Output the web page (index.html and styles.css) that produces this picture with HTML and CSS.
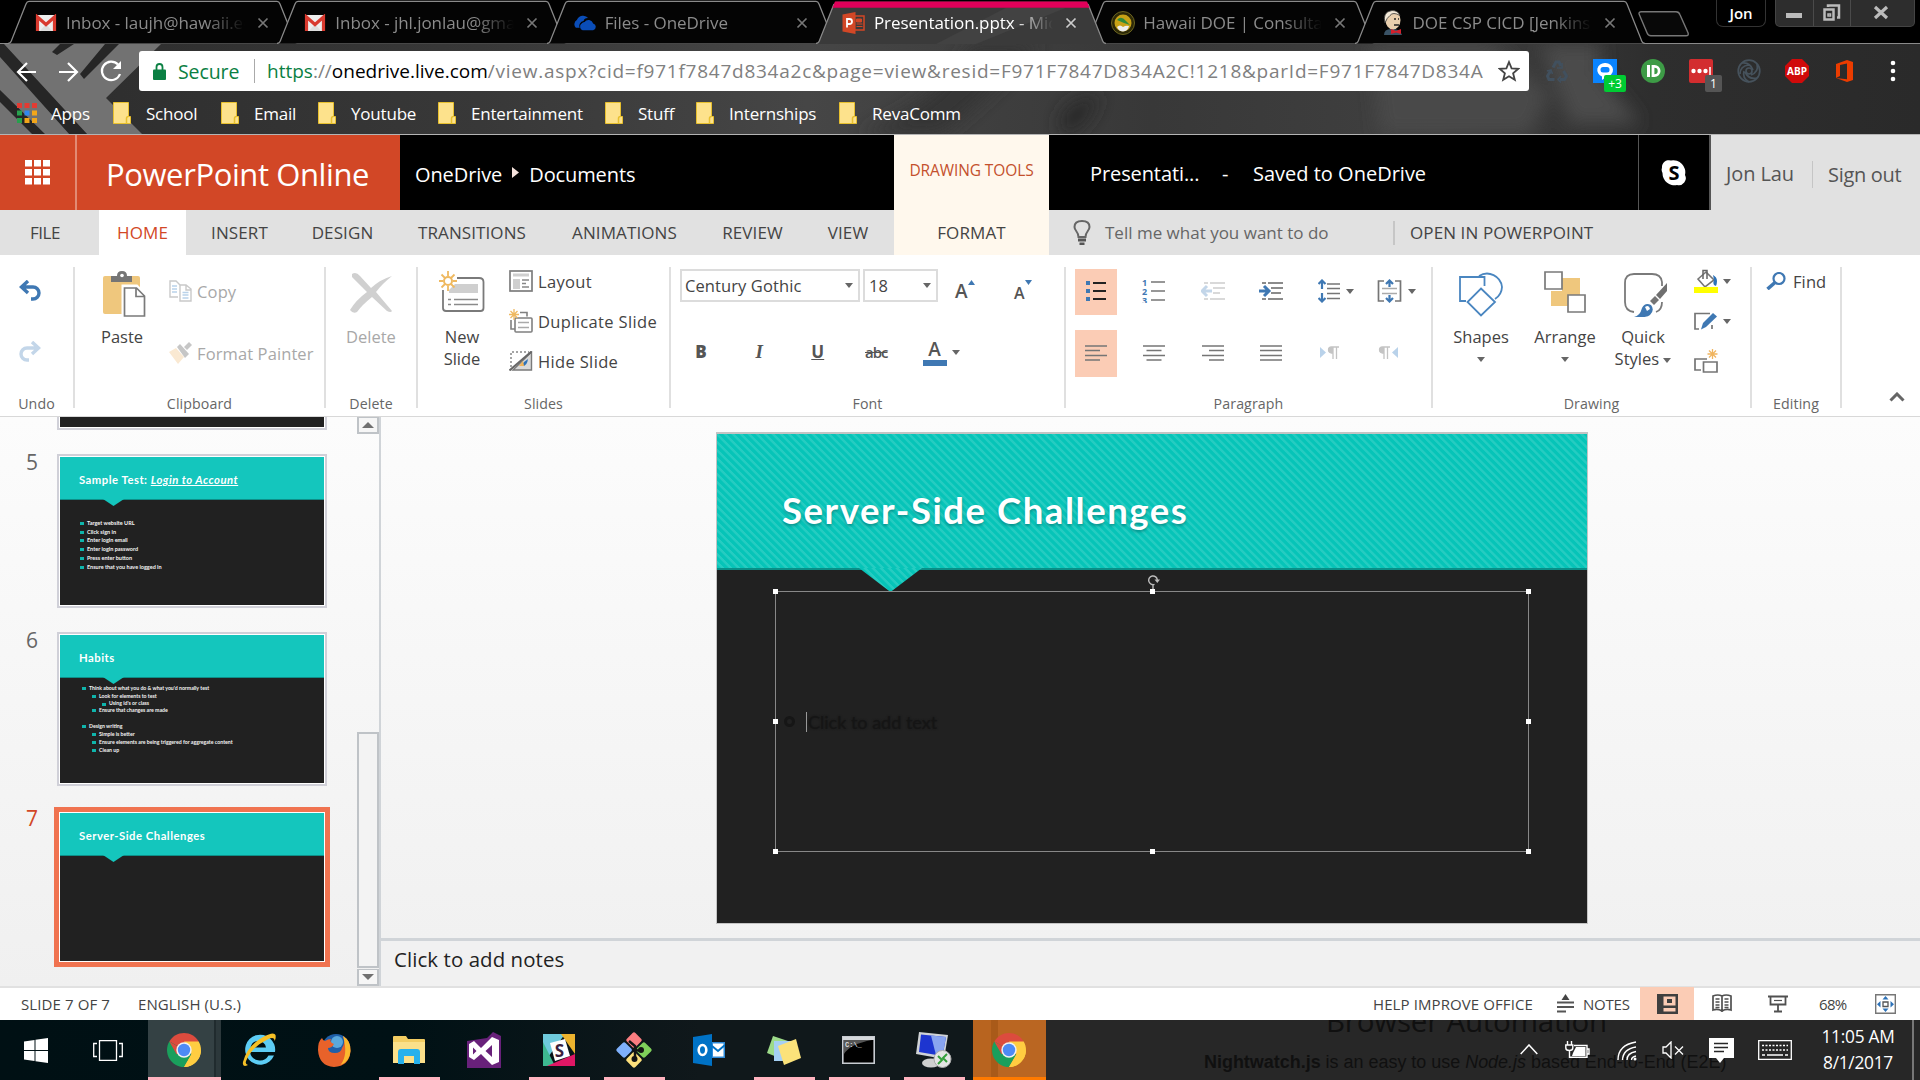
FILE: index.html
```html
<!DOCTYPE html>
<html lang="en">
<head>
<meta charset="utf-8">
<title>Presentation.pptx - Microsoft PowerPoint Online</title>
<link rel="stylesheet" href="styles.css">
</head>
<body>
<svg class="defs" width="0" height="0">
  <symbol id="tabshape" viewBox="0 0 290 45" preserveAspectRatio="none"><path d="M0 44.5 Q3 44 4 40 L18 4 Q19 1.500 21 1.500 H269 Q271 1.500 272 4 L286 40 Q287 44 290 44.500" fill="#040404" stroke="#8a8a8a" stroke-width="1.300"/></symbol>
  <symbol id="gmail" viewBox="0 0 22 18"><rect x="1" y="1" width="20" height="16" rx="1.500" fill="#eee"/><path d="M5 17 11 10l6 7z" fill="#ddd"/><path d="M2.500 17V3L11 10.500 19.500 3v14" fill="none" stroke="#d93a2f" stroke-width="3.200"/></symbol>
  <symbol id="chrome" viewBox="0 0 34 34"><path d="M17 17 2.300 8.500A17 17 0 0 1 31.700 8.500z" fill="#dc4b3e"/><path d="M17 17 2.300 8.500A17 17 0 0 0 17 34z" fill="#1a9f5c"/><path d="M17 17 9.500 21.300 2.300 8.500z" fill="#dc4b3e"/><path d="M17 34A17 17 0 0 0 31.700 8.500H17L24.400 21z" fill="#ffcd41"/><path d="M9.600 21.300 17 34 24.400 21.300z" fill="#1a9f5c"/><path d="M24.400 21.300 17 34A17 17 0 0 0 34 17z" fill="#ffcd41"/><circle cx="17" cy="17" r="7.700" fill="#f1f1f1"/><circle cx="17" cy="17" r="6.200" fill="#4d8af5"/></symbol>
  <symbol id="folder" viewBox="0 0 18 22"><path d="M.5.5h15v14h2v7H.5z" fill="#fde28c" stroke="#e8c02e"/><path d="M13.500 21.500v-5q0-2 2-2" fill="none" stroke="#e8c02e" stroke-width="1.500"/></symbol>
  <symbol id="x" viewBox="0 0 12 12"><path d="M1.500 1.500l9 9m0-9l-9 9" stroke="currentColor" stroke-width="1.700"/></symbol>
  <symbol id="dd" viewBox="0 0 8 5"><path d="M0 0h8L4 5z" fill="#666"/></symbol>
</svg>
<div class="screen">
  <header class="tabstrip">
    <div class="tab"><svg class="shape"><use href="#tabshape"/></svg><svg class="fav" width="22" height="18"><use href="#gmail"/></svg><span class="tt">Inbox - laujh@hawaii.edu</span><svg class="close" width="12" height="12"><use href="#x"/></svg></div>
    <div class="tab"><svg class="shape"><use href="#tabshape"/></svg><svg class="fav" width="22" height="18"><use href="#gmail"/></svg><span class="tt">Inbox - jhl.jonlau@gmail</span><svg class="close" width="12" height="12"><use href="#x"/></svg></div>
    <div class="tab"><svg class="shape"><use href="#tabshape"/></svg><svg class="fav cloud" width="25" height="16" viewBox="0 0 25 16"><path d="M3 13a5 5 0 0 1 1-8A7 7 0 0 1 16 3 4 4 0 0 0 11 6 5 5 0 0 0 7 13z" fill="#0a4db8"/><path d="M10 15.500a4 4 0 0 1-1-7 4 4 0 0 1 3-1.500 5 5 0 0 1 9 1.500A3.600 3.600 0 0 1 21 15.500z" fill="#0a4db8"/></svg><span class="tt">Files - OneDrive</span><svg class="close" width="12" height="12"><use href="#x"/></svg></div>
    <div class="tab active"><svg class="shape" viewBox="0 0 290 45" preserveAspectRatio="none"><path d="M0 45 Q3 44 4 40 L18 4 Q19 1.500 21 1.500 H269 Q271 1.500 272 4 L286 40 Q287 44 290 45z" fill="#3a3a3a"/><path d="M120 45L190 8h60L160 45z" fill="#424242"/><path d="M0 44.500 Q3 44 4 40 L18 4M272 4 L286 40 Q287 44 290 44.500" fill="none" stroke="#8a8a8a" stroke-width="1.300"/><path d="M16.500 8 19 1.500H271L273.500 8z" fill="#e1005a"/></svg><svg class="fav" width="23" height="22" viewBox="0 0 23 22"><path d="M12 4h9.500v14H12z" fill="none" stroke="#d24726" stroke-width="1.500"/><path d="M14 7h5v3h-5zM14 12h6M14 14.500h6" stroke="#d24726" fill="#d24726"/><path d="M0 2.500 13 0v22L0 19.500z" fill="#d24726"/><path d="M4.500 15.500V7H7q2.500 0 2.500 2.500T7 12H4.500" fill="none" stroke="#fff" stroke-width="1.800"/></svg><span class="tt">Presentation.pptx - Micr</span><svg class="close" width="12" height="12"><use href="#x"/></svg></div>
    <div class="tab"><svg class="shape"><use href="#tabshape"/></svg><svg class="fav" width="24" height="24" viewBox="0 0 24 24"><circle cx="12" cy="12" r="11.500" fill="#2e2a08" stroke="#6b6420"/><circle cx="12" cy="12" r="8.500" fill="#c8a216"/><path d="M6 9q4-5 9 1l4 4-6-2z" fill="#2f8a3a"/><path d="M6 16q3-3 6 0 3-2 6-1-1 5-6 5.500-4 0-6-4.500z" fill="#eee"/></svg><span class="tt">Hawaii DOE | Consultant</span><svg class="close" width="12" height="12"><use href="#x"/></svg></div>
    <div class="tab"><svg class="shape"><use href="#tabshape"/></svg><svg class="fav" width="22" height="25" viewBox="0 0 22 25"><path d="M2 25q0-6 7-6 9-1 11 6z" fill="#3a5366"/><ellipse cx="11" cy="10" rx="7.500" ry="9.500" fill="#e9cfae"/><path d="M3 13Q0 2 10 .5q6 0 8 5-7-4-10 0-3 2-5 7.500z" fill="#f3e9d8" stroke="#333" stroke-width=".8"/><path d="M12 9h2m2 0h1M12 15h5" stroke="#222" stroke-width="1.300"/><path d="M9 19l5 2 5-2v5l-5-1.500L9 24z" fill="#d3202c"/></svg><span class="tt">DOE CSP CICD [Jenkins]</span><svg class="close" width="12" height="12"><use href="#x"/></svg></div>
    <svg class="newtab" width="52" height="26" viewBox="0 0 52 26"><path d="M3 .8h35q3 0 4 3l8 18q1 3-2 3H13q-3 0-4-3L1.500 4Q0 1 3 .8z" fill="#080808" stroke="#777" stroke-width="1.400"/></svg>
    <div class="profile">Jon</div>
    <div class="winctl">
      <svg width="37" height="26"><path d="M10 15.500h16" stroke="#bbb" stroke-width="5"/></svg>
      <svg width="37" height="26" fill="none" stroke="#bbb" stroke-width="2.500"><path d="M14 7V5.500h11v12h-2M10.500 9.500h9v10h-9z"/><path d="M14 14h2.500v2H14z" stroke-width="1.500"/></svg>
      <svg width="64" height="26"><path d="M24 7l12 11M36 7 24 18" stroke="#bbb" stroke-width="3.200"/></svg>
    </div>
  </header>

  <section class="toolbar">
    <svg class="theme" width="1920" height="91" viewBox="0 0 1920 91">
      <defs>
        <linearGradient id="tg" x1="0" x2="1"><stop offset="0" stop-color="#2c2c2c"/><stop offset=".25" stop-color="#383838"/><stop offset=".42" stop-color="#464646"/><stop offset=".6" stop-color="#383838"/><stop offset=".75" stop-color="#404040"/><stop offset=".86" stop-color="#2e2e2e"/><stop offset="1" stop-color="#2a2a2a"/></linearGradient>
        <filter id="soft"><feGaussianBlur stdDeviation="9"/></filter>
      </defs>
      <rect width="1920" height="91" fill="url(#tg)"/>
      <path d="M0 0H161L106 54 143 91H0z" fill="#727272"/>
      <path d="M0 13V0H4L88 91H70zM74 0H60L52 8l5 3zM119 0H105L80 30l4 5zM0 46 46 91H33L0 58z" fill="#262626"/>
      <g filter="url(#soft)"><path d="M860 91Q950 50 970 0h70Q980 60 940 91z" fill="#343434"/><path d="M1063 91Q1050 60 1100 50q-10 30-30 41z" fill="#2a2a2a"/><path d="M1370 0h120l60 50-20 41H1380z" fill="#484848"/><path d="M1540 0h60v30l40 50h-70z" fill="#4c4c4c"/></g>
      <path d="M0 90.500H1920" stroke="#b4b4b4"/>
    </svg>
    <div class="navrow">
      <svg class="navs" width="110" height="26" viewBox="0 0 110 26" fill="none" stroke="#fff" stroke-width="2.200"><path d="M20 13H2M11 4l-9 9 9 9M43 13h18M52 4l9 9-9 9"/><path d="M102 5.500A9.300 9.300 0 1 0 104 15"/><path d="M105 2v8h-8z" fill="#fff" stroke="none"/></svg>
      <div class="omni">
        <svg width="13" height="17" viewBox="0 0 13 17"><path d="M3.500 7V4a3 3 0 0 1 6 0v3" fill="none" stroke="#0b8043" stroke-width="1.800"/><rect y="6.500" width="13" height="10.500" rx="1" fill="#0b8043"/></svg>
        <span class="secure">Secure</span><i class="vbar"></i>
        <span class="url"><b class="g">https</b>://<b class="k">onedrive.live.com</b><b class="tail">/view.aspx?cid=f971f7847d834a2c&amp;page=view&amp;resid=F971F7847D834A2C!1218&amp;parId=F971F7847D834A</b></span>
        <svg width="22" height="22" viewBox="0 0 22 22"><path d="M11 2l2.600 6.300 6.700.5-5.200 4.400 1.700 6.600L11 16.200l-5.800 3.600 1.700-6.600L1.700 8.800l6.700-.5z" fill="none" stroke="#444" stroke-width="1.800"/></svg>
      </div>
      <div class="exts">
        <svg width="24" height="24" viewBox="0 0 24 24" fill="none" stroke="#41505e" stroke-width="3"><path d="M8 8.500 11 3h3l2 4M18.500 12l3 5-2 3.500H15M9.500 20.500H4L2.500 17l3-5"/><path d="M17 4v5h-5M16 17l-3 3.500 3 3M2 12l4-1 1.500 4" stroke-width="1.600"/></svg>
        <div class="ext"><svg width="24" height="24" viewBox="0 0 24 24"><path d="M0 0h24v24H0z" fill="#0a84ff"/><path d="M12 4a7.500 7 0 0 1 1 14l-4 3v-3.500A7.500 7 0 0 1 12 4z" fill="#fff"/><rect x="7.500" y="8" width="9" height="5.500" rx="2.500" fill="#0a84ff"/></svg><span class="badge">+3</span></div>
        <svg width="24" height="24" viewBox="0 0 24 24"><circle cx="12" cy="12" r="12" fill="#3d9b46"/><path d="M7.500 6v12" stroke="#fff" stroke-width="3"/><path d="M12 7.400h1.500a4.600 4.600 0 0 1 0 9.200H12z" fill="none" stroke="#fff" stroke-width="2.800"/></svg>
        <div class="ext"><svg width="24" height="24" viewBox="0 0 24 24"><rect width="24" height="24" rx="2" fill="#d32d2f"/><circle cx="4.500" cy="12" r="2.200" fill="#fff"/><circle cx="10.500" cy="12" r="2.200" fill="#fff"/><circle cx="16.500" cy="12" r="2.200" fill="#fff"/><path d="M21 8v8" stroke="#fff" stroke-width="1.500"/></svg><span class="badge dark">1</span></div>
        <svg width="24" height="24" viewBox="0 0 24 24" fill="none" stroke="#46525c" stroke-width="1.700"><circle cx="12" cy="12" r="10.800"/><circle cx="12" cy="12" r="3"/><path d="M5 4q8-1 11 7M20 5q2 8-6 11M20 19q-8 2-12-6M3 15q0-8 9-9M12 23q-7-4-5-11"/></svg>
        <svg width="24" height="24" viewBox="0 0 24 24"><path d="M7 0h10l7 7v10l-7 7H7l-7-7V7z" fill="#d00a0a"/><text x="12" y="16.300" text-anchor="middle" class="abp">ABP</text></svg>
        <svg width="24" height="24" viewBox="0 0 24 24"><path d="M3 5 14 1l6 2v18l-6 2-11-4 11 1.300V4.500L7 6v11l-4 2z" fill="#eb3c00"/></svg>
        <svg width="24" height="24"><circle cx="12" cy="4" r="2.300" fill="#fff"/><circle cx="12" cy="12" r="2.300" fill="#fff"/><circle cx="12" cy="20" r="2.300" fill="#fff"/></svg>
      </div>
    </div>
    <nav class="bookmarks">
      <span class="bm apps"><svg width="20" height="20" viewBox="0 0 20 20"><path d="M0 0h5v5H0zM7.500 0h5v5h-5zM15 0h5v5h-5z" fill="#e33b32"/><path d="M0 7.500h5v5H0zM0 15h5v5H0z" fill="#27a04d"/><path d="M7.500 7.500h5v5h-5z" fill="#2f88f0"/><path d="M15 7.500h5v5h-5zM7.500 15h5v5h-5zM15 15h5v5h-5z" fill="#f2a61a"/></svg>Apps</span>
      <span class="bm b1"><svg width="18" height="22"><use href="#folder"/></svg>School</span>
      <span class="bm b2"><svg width="18" height="22"><use href="#folder"/></svg>Email</span>
      <span class="bm b3"><svg width="18" height="22"><use href="#folder"/></svg>Youtube</span>
      <span class="bm b4"><svg width="18" height="22"><use href="#folder"/></svg>Entertainment</span>
      <span class="bm b5"><svg width="18" height="22"><use href="#folder"/></svg>Stuff</span>
      <span class="bm b6"><svg width="18" height="22"><use href="#folder"/></svg>Internships</span>
      <span class="bm"><svg width="18" height="22"><use href="#folder"/></svg>RevaComm</span>
    </nav>
  </section>

  <section class="apphead">
    <div class="launcher"><svg width="25" height="25" viewBox="0 0 25 25" fill="#fff"><path d="M0 0h7v6.500H0zM9 0h7v6.500H9zM18 0h7v6.500h-7zM0 9h7v6.500H0zM9 9h7v6.500H9zM18 9h7v6.500h-7zM0 18h7v6.500H0zM9 18h7v6.500H9zM18 18h7v6.500h-7z"/></svg></div>
    <div class="brand">PowerPoint Online</div>
    <div class="crumbs"><span>OneDrive</span><svg width="7" height="11"><path d="M0 0v11l7-5.500z" fill="#f6e3dc"/></svg><span>Documents</span></div>
    <div class="ctx">DRAWING TOOLS</div>
    <div class="doc"><span class="dname">Presentati...</span><span class="dash">-</span><span class="saved">Saved to OneDrive</span></div>
    <div class="skype"><svg width="28" height="28" viewBox="0 0 28 28"><path d="M2 9A7 7 0 0 1 11 1.500 12 12 0 0 1 25 16a7 7 0 0 1-8 10A12 12 0 0 1 2.500 14Q1 11 2 9z" fill="#fff"/><text x="14" y="20.500" text-anchor="middle" class="sk">S</text></svg></div>
    <div class="account"><span class="me">Jon Lau</span><span class="so">Sign out</span></div>
  </section>

  <nav class="rtabs">
    <span class="t1">FILE</span><span class="t2">HOME</span><span class="t3">INSERT</span><span class="t4">DESIGN</span><span class="t5">TRANSITIONS</span><span class="t6">ANIMATIONS</span><span class="t7">REVIEW</span><span class="t8">VIEW</span><span class="t9">FORMAT</span>
    <div class="tell"><svg width="18" height="25" viewBox="0 0 18 25"><path d="M5.500 17q0-3-2-5.500-2-2.500-2-4.500 0-6 7.500-6t7.500 6q0 2-2 4.500T12.500 17z" fill="none" stroke="#666" stroke-width="2"/><path d="M5 18.500h8v3H5zM6.500 22.500h5V25h-5z" fill="#555"/></svg>Tell me what you want to do</div>
    <div class="openpp">OPEN IN POWERPOINT</div>
  </nav>

  <section class="ribbon">
    <div class="grp g-undo"><div class="body">
      <svg width="22" height="21" viewBox="0 0 22 21"><path d="M2.500 7H14a5.500 5.500 0 0 1 0 12h-2M9 1 2.500 7 9 13" fill="none" stroke="#3f78b3" stroke-width="3.400"/></svg>
      <svg width="22" height="21" viewBox="0 0 22 21"><path d="M19.500 7H8a5.500 5.500 0 0 0 0 12h2M13 1l6.500 6L13 13" fill="none" stroke="#c3d6e9" stroke-width="3.400"/></svg>
    </div><div class="gl">Undo</div></div>

    <div class="grp g-clip"><div class="body">
      <div class="big w44"><svg width="44" height="46" viewBox="0 0 44 46"><rect x="1" y="5" width="37" height="38" rx="2" fill="#efc77d"/><path d="M9 11V5h6q0-5 5-5t5 5h5v6z" fill="#757575"/><circle cx="20" cy="4.500" r="1.800" fill="#fff"/><path d="M21.500 15.500h13l9 9v21h-22z" fill="#fff" stroke="#fff" stroke-width="4"/><path d="M22.500 17h12l8 8v20h-20zM34 17v8.500h8.500" fill="#fff" stroke="#7a7a7a" stroke-width="1.700"/></svg><span class="pl">Paste</span></div>
      <div class="rows two"><div class="row off"><svg width="23" height="22" viewBox="0 0 23 22" fill="none" stroke="#c9c9c9" stroke-width="1.400"><path d="M9 17H1V1h6l4 4"/><path d="M11 5h6l5 4v12H11zM17 5v5h5"/><path d="M3 6h5M3 9h5M3 12h5M13.500 12.500h6M13.500 15h6M13.500 18h6" stroke="#b9d2ea"/></svg>Copy</div>
      <div class="row off"><svg width="23" height="22" viewBox="0 0 23 22"><path d="M0 10 7 6l8 9-6 7z" fill="#fae9d2"/><path d="M8 5l3-3 9 10-4 4z" fill="#c6c6c6"/><path d="M15 5l5-5 3 3-5 5z" fill="#c6c6c6"/></svg>Format Painter</div></div>
    </div><div class="gl">Clipboard</div></div>

    <div class="grp g-del"><div class="body"><div class="big"><svg width="44" height="46" viewBox="0 0 44 46"><path d="M3 3q4-3 8 2l11 12Q32 8 43 5 33 13 27 21l16 19q-1 2-5 0L23 26Q13 34 8 41q-4 2-7-2 6-10 17-18L3 6z" fill="#d0d0d0"/></svg><span class="mute">Delete</span></div></div><div class="gl">Delete</div></div>

    <div class="grp g-slides"><div class="body">
      <div class="big"><svg width="46" height="46" viewBox="0 0 46 46"><path d="M18 7H40q4.500 0 4.500 4v26q0 3-3 3H7q-3 0-3-3V19" fill="none" stroke="#7a7a7a" stroke-width="1.800"/><path d="M16 13h23v9H10v-3z" fill="#cfcfcf"/><path d="M15 28.500h24M15 33.500h24M9 28.500h3M9 33.500h3" stroke="#8a8a8a" stroke-width="1.600"/><circle cx="9" cy="10" r="4" fill="#fff" stroke="#efb960" stroke-width="2"/><path d="M9 0v5M9 15v5M0 10h4M14 10h4M2.500 3.500l4 4M15.500 3.500l-4 4M2.500 16.500l4-4M15.500 16.500l-4-4" stroke="#efb960" stroke-width="1.800"/></svg><span>New<br>Slide</span></div>
      <div class="rows three">
      <div class="row"><svg width="24" height="22" viewBox="0 0 24 22"><rect x="1" y="1" width="22" height="20" fill="#fff" stroke="#7d7d7d" stroke-width="1.700"/><path d="M4 3.500h16v3H4zM4 9h7v10H4z" fill="#cfcfcf"/><path d="M13 10h7M13 13.500h4M13 17h7" stroke="#888" stroke-width="1.400"/></svg>Layout</div>
      <div class="row"><svg width="24" height="24" viewBox="0 0 24 24" fill="none" stroke="#808080" stroke-width="1.600"><path d="M11 3.500h7v4M2 11v9h4"/><rect x="6" y="9" width="17" height="14" rx="1" fill="#fff"/><path d="M9 13.500h11M9 18.500h11" stroke="#aaa"/><path d="M5 0v11M0 5.500h10M1.500 2l7 7M8.500 2l-7 7" stroke="#efb960" stroke-width="1.300"/></svg>Duplicate Slide</div>
      <div class="row"><svg width="24" height="20" viewBox="0 0 24 20" fill="none"><path d="M2 16V1h18" stroke="#888" stroke-width="1.500" stroke-dasharray="2 2"/><path d="M4 19H22.500V1z" fill="#d9d9d9" stroke="#7a7a7a" stroke-width="1.400"/><path d="M12 15q6 1 7-7l-4 3z" fill="#2d72b8"/><path d="M10 15l4-5 1 5z" fill="#f0b35a"/><path d="M.5 19.500 22.500.5" stroke="#666" stroke-width="2"/></svg>Hide Slide</div></div>
    </div><div class="gl">Slides</div></div>

    <div class="grp g-font"><div class="body">
      <div class="fontrow">
        <div class="sel face">Century Gothic<svg width="8" height="5"><use href="#dd"/></svg></div>
        <div class="sel size">18<svg width="8" height="5"><use href="#dd"/></svg></div>
        <span class="grow">A<svg width="7" height="5"><path d="M0 5h7L3.500 0z" fill="#3f78b3"/></svg></span>
        <span class="grow shrink">A<svg width="7" height="5"><path d="M0 0h7L3.500 5z" fill="#3f78b3"/></svg></span>
      </div>
      <div class="stylerow"><b>B</b><i>I</i><u>U</u><s>abc</s><span class="fc"><em>A</em><svg width="8" height="5"><use href="#dd"/></svg></span></div>
    </div><div class="gl">Font</div></div>

    <div class="grp g-para"><div class="body">
      <div class="cell on"><svg width="22" height="22" viewBox="0 0 22 22"><path d="M8 3h13M8 11h13M8 19h13" stroke="#222" stroke-width="2"/><path d="M1 3h4M1 11h4M1 19h4" stroke="#3f78b3" stroke-width="4"/></svg></div>
      <div class="cell"><svg width="24" height="24" viewBox="0 0 24 24"><path d="M9 3h14M9 12h14M9 21h14" stroke="#757575" stroke-width="1.700"/><g class="nums"><text x="0" y="7">1</text><text x="0" y="16">2</text><text x="0" y="25">3</text></g></svg></div>
      <div class="cell"><svg width="24" height="20" viewBox="0 0 24 20" fill="none"><path d="M3 2h4M9 2h15M12 7h12M12 12h7M3 18h4M9 18h15" stroke="#cdcdcd" stroke-width="1.600"/><path d="M11 10H2M6 5l-5 5 5 5" stroke="#c3d6e9" stroke-width="3"/></svg></div>
      <div class="cell"><svg width="24" height="20" viewBox="0 0 24 20" fill="none"><path d="M3 2h4M9 2h15M12 7h12M12 12h10M3 18h4M9 18h15" stroke="#666" stroke-width="1.600"/><path d="M0 10h9M5 5l5 5-5 5" stroke="#3f78b3" stroke-width="3"/></svg></div>
      <div class="cell w"><svg width="22" height="24" viewBox="0 0 22 24" fill="none"><path d="M9 5h13M9 9.500h13M9 14.500h13M9 19.500h13" stroke="#757575" stroke-width="1.700"/><path d="M4 2v8M4 14v8M.5 5 4 1.500 7.500 5M.5 19 4 22.500 7.500 19" stroke="#3f78b3" stroke-width="2.200"/></svg><svg width="8" height="5"><use href="#dd"/></svg></div>
      <div class="cell w"><svg width="25" height="24" viewBox="0 0 25 24" fill="none"><path d="M7 2H1.500v20H7M18 2h5.500v20H18" stroke="#757575" stroke-width="1.700"/><path d="M5 9.500h15M5 14.500h15" stroke="#aaa" stroke-width="1.500"/><path d="M12.500 2v6M12.500 16v6M9 5l3.500-3.500L16 5M9 19l3.500 3.500L16 19" stroke="#3f78b3" stroke-width="2.200"/></svg><svg width="8" height="5"><use href="#dd"/></svg></div>
      <div class="cell on"><svg width="22" height="18"><path d="M0 2h22M0 6.500h15M0 11.500h22M0 16h15" stroke="#757575" stroke-width="1.700"/></svg></div>
      <div class="cell"><svg width="22" height="18"><path d="M0 2h22M3.500 6.500h15M0 11.500h22M3.500 16h15" stroke="#757575" stroke-width="1.700"/></svg></div>
      <div class="cell"><svg width="22" height="18"><path d="M0 2h22M7 6.500h15M0 11.500h22M7 16h15" stroke="#757575" stroke-width="1.700"/></svg></div>
      <div class="cell"><svg width="22" height="18"><path d="M0 2h22M0 6.500h22M0 11.500h22M0 16h22" stroke="#757575" stroke-width="1.700"/></svg></div>
      <div class="cell"><svg width="20" height="14" viewBox="0 0 20 14"><path d="M0 1v11l6-5.500z" fill="#b9d2ea"/><path d="M13 1h-1.500a3 3 0 0 0 0 6H13zM13 1v12M16.500 1v12M12 1h7" fill="#c4c4c4" stroke="#c4c4c4" stroke-width="1.300"/></svg></div>
      <div class="cell"><svg width="20" height="14" viewBox="0 0 20 14"><path d="M20 1v11l-6-5.500z" fill="#b9d2ea"/><path d="M6 1H4.500a3 3 0 0 0 0 6H6zM6 1v12M9.500 1v12M5 1h7" fill="#c4c4c4" stroke="#c4c4c4" stroke-width="1.300"/></svg></div>
    </div><div class="gl">Paragraph</div></div>

    <div class="grp g-draw"><div class="body">
      <div class="big c1"><svg width="46" height="46" viewBox="0 0 46 46" fill="none" stroke="#4a86c0" stroke-width="1.800"><path d="M21 5A15 15 0 0 1 44 16A15 15 0 0 1 37 28"/><path d="M8 30H2V6H26.500V15"/><path d="M23 17.500 37 31 23 44.500 9.500 31z" fill="#fff"/></svg><span>Shapes</span><svg class="dd" width="8" height="5"><use href="#dd"/></svg></div>
      <div class="big c2"><svg width="42" height="46" viewBox="0 0 42 46" stroke-width="1.700"><path d="M18 7h18v17H18zM7 20h18v15H7z" fill="#efc77d"/><g fill="#fff" stroke="#7a7a7a"><path d="M1 1h17v17H1zM24 24h17v17H24z"/></g></svg><span>Arrange</span><svg class="dd" width="8" height="5"><use href="#dd"/></svg></div>
      <div class="big c3"><svg width="46" height="46" viewBox="0 0 46 46"><path d="M12 41Q3 40 3 31V12Q3 3 12 3H30Q39 3 40 11V15M40 31q0 8-6 10" fill="none" stroke="#7a7a7a" stroke-width="1.800"/><path d="M45 12 34 24l4 4 7-8z" fill="#6f6f6f"/><path d="M33 25l-5 5 4 4 5-5z" fill="#757575"/><path d="M12 46q6-1 8-9 3-6 9-3 4 5-1 10-3 3-16 2z" fill="#3f78b3"/><path d="M23 36q4-3 5 2l-3 2z" fill="#fff"/></svg><span>Quick<br>Styles <svg class="in" width="8" height="5"><use href="#dd"/></svg></span></div>
      <div class="mini">
        <div><svg width="24" height="24" viewBox="0 0 24 24"><path d="M4 10 12 3l8 8-9 7z" fill="#fff" stroke="#757575" stroke-width="1.600"/><path d="M9 10V1.500h4V10" fill="none" stroke="#666" stroke-width="1.500"/><path d="M19 6q6 3 3 11-4-1-2-6z" fill="#2d72b8"/><path d="M0 18h24v6H0z" fill="#ff0"/></svg><svg width="8" height="5"><use href="#dd"/></svg></div>
        <div><svg width="24" height="18" viewBox="0 0 24 18"><path d="M16 1.500H1V17h4M18 17v-4" fill="none" stroke="#757575" stroke-width="1.700"/><path d="M7 17.500 9 11 19 1l4 3.500L12 15z" fill="#3f78b3"/></svg><svg width="8" height="5"><use href="#dd"/></svg></div>
        <div><svg width="24" height="24" viewBox="0 0 24 24" fill="none" stroke="#757575" stroke-width="1.700"><path d="M13 10H1V21H7"/><path d="M9.500 13H23V23H9.500z" fill="#fff"/><path d="M18.500 0v10M13.500 5h10M15 1.500l7 7M22 1.500l-7 7" stroke="#f0b560" stroke-width="1.300"/></svg></div>
      </div>
    </div><div class="gl">Drawing</div></div>

    <div class="grp g-edit"><div class="body"><div class="row"><svg width="20" height="18" viewBox="0 0 20 18" fill="none" stroke="#3f78b3"><circle cx="13" cy="6.500" r="5.500" stroke-width="2.200"/><path d="M9 10.500 1.500 17" stroke-width="3.600"/></svg>Find</div></div><div class="gl">Editing</div></div>
    <svg class="collapse" width="16" height="10"><path d="M1.500 8.500 8 2l6.500 6.500" fill="none" stroke="#666" stroke-width="3"/></svg>
  </section>

  <main class="work">
    <aside class="thumbs">
      <div class="list">
        <div class="titem cut"><span class="n"></span><div class="frame"><div class="ts"></div></div></div>
        <div class="titem"><span class="n">5</span><div class="frame"><div class="ts"><div class="th">Sample Test: <em>Login to Account</em></div>
          <ul class="s5"><li>Target website URL</li><li>Click sign in</li><li>Enter login email</li><li>Enter login password</li><li>Press enter button</li><li>Ensure that you have logged in</li></ul></div></div></div>
        <div class="titem"><span class="n">6</span><div class="frame"><div class="ts"><div class="th">Habits</div>
          <ul class="s6"><li>Think about what you do &amp; what you'd normally test</li><li class="l2">Look for elements to test</li><li class="l3">Using id's or class</li><li class="l2">Ensure that changes are made</li><li class="gap">Design writing</li><li class="l2">Simple is better</li><li class="l2">Ensure elements are being triggered for aggregate content</li><li class="l2">Clean up</li></ul></div></div></div>
        <div class="titem cur"><span class="n">7</span><div class="frame"><div class="ts"><div class="th">Server-Side Challenges</div></div></div></div>
      </div>
      <div class="sbar"><div class="sb"><svg width="12" height="6"><path d="M0 6h12L6 0z" fill="#707070"/></svg></div><div class="track"></div><div class="thumb"></div><div class="sb dn"><svg width="12" height="6"><path d="M0 0h12L6 6z" fill="#707070"/></svg></div></div>
    </aside>
    <section class="stage">
      <div class="canvas">
        <div class="slide">
          <div class="band"><h1>Server-Side Challenges</h1></div>
          <div class="notch"></div>
          <div class="selbox">
            <svg class="rot" width="14" height="16" viewBox="0 0 14 16" fill="none" stroke="#bbb" stroke-width="1.400"><path d="M8.500 9.300A4.300 4.300 0 1 1 11.300 5M7 10v6"/><path d="M8.500 4.500h5.500l-2.700 3.500z" fill="#bbb" stroke="none"/></svg>
            <i class="h h1"></i><i class="h h2"></i><i class="h h3"></i><i class="h h4"></i><i class="h h5"></i><i class="h h6"></i><i class="h h7"></i><i class="h h8"></i>
            <div class="ph"><i class="dot"></i><i class="caret"></i><span>Click to add text</span></div>
          </div>
        </div>
      </div>
      <div class="notes">Click to add notes</div>
    </section>
  </main>

  <footer class="status">
    <span class="s1">SLIDE 7 OF 7</span><span class="s2">ENGLISH (U.S.)</span>
    <span class="s3">HELP IMPROVE OFFICE</span>
    <span class="s4"><svg width="17" height="19" viewBox="0 0 17 19"><path d="M4.500 6 8.500 0l4 6z" fill="#444"/><path d="M0 8.500h17M0 13h17M0 17.500h9" stroke="#555" stroke-width="1.800"/></svg>NOTES</span>
    <span class="s5b"><svg width="21" height="20" viewBox="0 0 21 20"><path d="M0 0h21v20H0z" fill="#3f3f3f"/><path d="M6.500 2.500h12v9h-12zM6.500 14h12v3.500h-12z" fill="#fbccb5"/><path d="M10 5h5v4h-5z" fill="#3f3f3f"/></svg></span>
    <svg class="s6b" width="20" height="19" viewBox="0 0 20 19" fill="none" stroke="#505050"><path d="M1 2q5-2 9 0 4-2 9 0v14q-5-1.500-9 1-4-2.500-9-1zM10 2v16" stroke-width="1.700"/><path d="M3.500 5h4M3.500 8h4M3.500 11h4M3.500 13.500h4M12.500 5h4M12.500 8h4M12.500 11h4M12.500 13.500h4" stroke-width="1.400"/></svg>
    <svg class="s7b" width="20" height="18" viewBox="0 0 20 18" fill="none" stroke="#505050" stroke-width="1.800"><path d="M0 1.500h20M2.500 2v7.500h15V2M10 10v6M6 16.500h8"/><path d="M6 5.500h8" stroke-width="1.200"/></svg>
    <span class="s8b">68%</span>
    <svg class="s9b" width="21" height="20" viewBox="0 0 21 20"><path d="M.7.700h19.600v18.600H.7z" fill="none" stroke="#777" stroke-width="1.400"/><path d="M8 8h5v4.500H8z" fill="none" stroke="#555" stroke-width="1.300"/><path d="M10.500 2l3 3.500h-6zM10.500 18l3-3.500h-6zM2 10.200 5.500 7v6.500zM19 10.200 15.500 7v6.500z" fill="#2d72b8"/></svg>
  </footer>

  <footer class="taskbar">
    <div class="ghost"><div class="gh1">Browser Automation</div><div class="gh2"><b>Nightwatch.js</b> is an easy to use <i>Node.js</i> based End-to-End (E2E)</div></div>
    <div class="tk k0"><svg width="24" height="25" viewBox="0 0 24 25" fill="#fff"><path d="M0 3.500 10.500 2v10H0zM11.500 1.800 24 0v12H11.500zM0 13h10.500v10L0 21.500zM11.500 13H24v12l-12.500-1.800z"/></svg></div>
    <div class="tk k1"><svg width="30" height="21" viewBox="0 0 30 21" fill="none" stroke="#fff" stroke-width="1.300"><path d="M6.500.7h17v19.600h-17zM4 3.500H.700v13H4M26 3.500h3.300v13H26"/></svg></div>
    <div class="tk kc run"><svg width="34" height="34"><use href="#chrome"/></svg></div>
    <div class="tk"><svg width="36" height="36" viewBox="0 0 36 36"><path d="M9 20a10 10 0 0 0 18.500 3.500H33A15 15 0 1 1 34 20zM9.500 15.500h15.500q-1-6-7.500-6.500-6.500 0-8 6.500z" fill="#5dcdf5" fill-rule="evenodd"/><path d="M7 33Q1 36 2 30 6 14 22 5 33-1 34.500 3q.7 4-1 6 0-5-7-1.500Q11 15 6 27q-3 5 1 6z" fill="#f6c026"/></svg></div>
    <div class="tk"><svg width="34" height="34" viewBox="0 0 34 34"><circle cx="19" cy="15" r="14" fill="#1f5fa8"/><circle cx="20" cy="9" r="6" fill="#5aa8dc"/><path d="M1 17Q1 8 5 5q1 3 3 3 3-2 6-2-2 3 3 5-2 4-6 4 0 5 7 5 6 0 7-5Q29 9 26 3q8 5 7.500 15-1 15-16.500 16Q2 33 1 17z" fill="#e8622a"/><path d="M26 3q8 5 7.500 15-1 11-10 14 8-10 2.500-29z" fill="#fbb92e"/></svg></div>
    <div class="tk run"><svg width="32" height="28" viewBox="0 0 32 28"><path d="M0 1q0-1 1-1h12l2 3h16q1 0 1 1v23H0z" fill="#f3cd62"/><path d="M0 6h32v21H0z" fill="#fbe08a"/><path d="M5 28V16q0-3 3-3h16q3 0 3 3v12h-6v-8H11v8z" fill="#27b1ec"/></svg></div>
    <div class="tk"><svg width="34" height="36" viewBox="0 0 34 36"><path d="M0 9 20 6 26 0l8 4v32H0z" fill="#68217a"/><path d="M2 12l5-3 7 7 11-11 7 3v22l-7 3-11-11-7 6-5-3zM6 15.500v7L9.500 19zM25 13l-6.500 6L25 25z" fill="#fff" fill-rule="evenodd"/></svg></div>
    <div class="tk run"><svg width="32" height="32" viewBox="0 0 32 32"><path d="M0 0h22L0 30z" fill="#6ecadc"/><path d="M0 8 12 32H0z" fill="#3eb890"/><path d="M18 0h14v20z" fill="#ecb32e"/><path d="M4 32h28V20z" fill="#e01765"/><path d="M7 9l15-4 5 17-15 5z" fill="#fff"/><text x="16.500" y="22.500" text-anchor="middle" class="sl">S</text></svg></div>
    <div class="tk run"><svg width="36" height="36" viewBox="0 0 36 36"><g transform="rotate(45 18 18)"><rect x="5" y="5" width="12" height="12" rx="2" fill="#fb7d80"/><rect x="19" y="5" width="12" height="12" rx="2" fill="#7fd05a"/><rect x="5" y="19" width="12" height="12" rx="2" fill="#7fb0fb"/><rect x="19" y="19" width="12" height="12" rx="2" fill="#fde07c"/></g><path d="M13 9l6 5v14M19 14q0 6 6 4" fill="none" stroke="#151515" stroke-width="2.500"/><circle cx="18.500" cy="27" r="3" fill="#151515"/><circle cx="25" cy="18" r="3" fill="#151515"/></svg></div>
    <div class="tk"><svg width="32" height="32" viewBox="0 0 32 32"><path d="M18 8h14v16H18z" fill="#2e8ad8"/><path d="M20 9.500h10.500v13H20z" fill="#fff"/><path d="M19 12l6 5 7-6" stroke="#0072c6" stroke-width="2" fill="none"/><path d="M0 3 19 0v32L0 29z" fill="#0072c6"/><ellipse cx="9.500" cy="16" rx="3.800" ry="5" fill="none" stroke="#fff" stroke-width="2.600"/></svg></div>
    <div class="tk run"><svg width="34" height="30" viewBox="0 0 34 30"><path d="M6 1l15 5-6 18L0 18z" fill="#9ddb8a"/><path d="M7 6h17v20H7z" fill="#a5d0f5"/><path d="M11 11 29 4l5 19-17 7z" fill="#fbe27a"/></svg></div>
    <div class="tk run"><svg width="33" height="28" viewBox="0 0 33 28"><path d="M.8.800h31.400v26.400H.8z" fill="#000" stroke="#c8ccd2" stroke-width="1.600"/><path d="M1 1h31v3H1z" fill="#d5d8dc"/><path d="M2 4h28Q8 8 2 18z" fill="#555"/><text x="3" y="11" class="cmd">C:\_</text></svg></div>
    <div class="tk run"><svg width="36" height="36" viewBox="0 0 36 36"><path d="M3 0 32 3 28 27 0 22z" fill="#cfd2d6"/><path d="M5 2.500 30 5 26.500 24 3 20z" fill="#1d35d0"/><path d="M15 3.500 30 5 26.500 24 20 23z" fill="#88a4f0"/><ellipse cx="15" cy="31" rx="9" ry="4.500" fill="#cfcfcf"/><circle cx="26.500" cy="27" r="8.500" fill="#e4e4e4" stroke="#aaa"/><path d="M22 24l4 4-4 4M31 22l-4 4 4 4" fill="none" stroke="#34a03a" stroke-width="2"/></svg></div>
    <div class="tk ko run"><svg width="34" height="34"><use href="#chrome"/></svg></div>
    <div class="tray">
      <svg width="18" height="11" class="y1"><path d="M.7 10 9 1l8.300 9" fill="none" stroke="#fff" stroke-width="1.500"/></svg>
      <svg width="25" height="18" viewBox="0 0 25 18" class="y2"><path d="M2.500 0v4M6.500 0v4M.8 4h7v3q0 2.500-3.500 2.500T.8 7zM4.500 10v6.300H22V4.500H9M22.500 8H24v5h-1.500" fill="none" stroke="#fff" stroke-width="1.400"/><path d="M8 12l3-6h9.500v9H7z" fill="#fff"/></svg>
      <svg width="20" height="20" viewBox="0 0 20 20" class="y3" fill="none" stroke="#fff" stroke-width="1.400"><path d="M1 19Q1 4 19 1M5.500 19Q6 8 19 6M10 19q0-7 9-8.500M14.500 19q0-3 4.500-4"/><circle cx="18" cy="18" r="1.500" fill="#fff" stroke="none"/></svg>
      <svg width="22" height="18" viewBox="0 0 22 18" class="y4" fill="none" stroke="#fff" stroke-width="1.300"><path d="M1 6h3l5-5v16l-5-5H1zM13 5.500l8 8M21 5.500l-8 8"/></svg>
      <svg width="25" height="25" viewBox="0 0 25 25" class="y5"><path d="M0 0h25v20H15l-4 5-4-5H0z" fill="#fff"/><path d="M5 5.500h14M5 9.500h14M5 13.500h10" stroke="#272727" stroke-width="1.300"/></svg>
      <svg width="34" height="20" viewBox="0 0 34 20" class="y6" fill="none" stroke="#fff" stroke-width="1.300"><path d="M.7.700h32.600v18.600H.7z"/><path d="M4 5.500h26M4 10h26" stroke-dasharray="2 1.500"/><path d="M4 15h3M9 15h16M27 15h3"/></svg>
      <div class="clock"><div>11:05 AM</div><div>8/1/2017</div></div>
    </div>
  </footer>
</div>
</body>
</html>
```
FILE: styles.css
```css
* { box-sizing: border-box; }
body { margin: 0; background: #000; }
.defs { position: absolute; }
svg { display: block; flex: none; }
.screen { width: 1920px; height: 1080px; overflow: hidden; display: flex; flex-direction: column; font-family: "Open Sans", "Noto Sans", sans-serif; color: #444; white-space: nowrap; }
.screen > * { flex: none; }

/* browser tab strip */
.tabstrip { height: 44px; background: #000; display: flex; padding-left: 8px; position: relative; box-shadow: inset 0 -1px #8a8a8a; }
.tab { width: 290px; margin-right: -20.700px; height: 44px; position: relative; display: flex; align-items: center; padding: 1px 0 0 26px; color: #8b8b8b; flex: none; }
.tab .shape { position: absolute; left: 0; top: 0; width: 290px; height: 44px; }
.tab > * { position: relative; }
.fav { width: 24px; }
.tt { width: 179px; margin-left: 8px; font-size: 17px; letter-spacing: -.05px; overflow: hidden; -webkit-mask-image: linear-gradient(90deg, #000 78%, transparent); mask-image: linear-gradient(90deg, #000 78%, transparent 100%); }
.close { margin-left: 12px; color: #777; }
.tab.active { color: #fff; z-index: 2; }
.tab.active .close { color: #ccc; }
.newtab { margin: 11px 0 0 14px; }
.profile { position: absolute; left: 1716px; top: 0; width: 50px; height: 27px; border: 1px solid #333; border-top: 0; border-radius: 0 0 7px 7px; color: #fff; font-size: 15px; font-weight: 600; line-height: 27px; text-align: center; }
.winctl { position: absolute; left: 1776px; top: 0; width: 138px; height: 26px; background: #2d2d2d; border-radius: 0 0 4px 4px; box-shadow: 0 0 0 1px #444; display: flex; }
.winctl svg + svg { border-left: 1px solid #4a4a4a; }

/* address bar and bookmarks */
.toolbar { height: 91px; position: relative; }
.theme { position: absolute; left: 0; top: 0; }
.navrow { position: relative; display: flex; align-items: center; height: 54px; padding-left: 16px; }
.navs { margin: 1px 13px 0 0; }
.omni { width: 1390px; height: 40px; background: #fff; border-radius: 3px; display: flex; align-items: center; padding-left: 14px; font-size: 19px; }
.secure { color: #0b8043; margin-left: 12px; width: 76px; font-size: 19.500px; letter-spacing: -.1px; }
.vbar { width: 1px; height: 24px; background: #aaa; margin-right: 12px; }
.url { width: 1220px; overflow: hidden; color: #808080; margin-right: 11px; letter-spacing: 0; }
.url b { font-weight: 400; }
.url .g { color: #0b8043; }
.url .k { color: #000; }
.url .tail { letter-spacing: .75px; }
.exts { display: flex; gap: 24px; margin-left: 16px; }
.ext { position: relative; width: 24px; }
.badge { position: absolute; left: 11px; top: 16px; width: 22px; height: 17px; background: #0c3; border-radius: 2px; color: #fff; font-size: 12px; line-height: 17px; text-align: center; }
.badge.dark { left: 16px; width: 17px; background: #555; }
.abp { font: 700 10px "Open Sans", sans-serif; fill: #fff; }
.bookmarks { position: relative; display: flex; align-items: center; height: 32px; padding: 0 0 2px 17px; color: #fff; font-size: 17px; letter-spacing: -.2px; }
.bm { display: flex; align-items: center; gap: 15px; flex: none; }
.apps { width: 96px; gap: 14px; }
.b1 { width: 108px; } .b2 { width: 97px; } .b3 { width: 120px; } .b4 { width: 167px; } .b5 { width: 91px; } .b6 { width: 143px; }

/* application header */
.apphead { height: 75px; display: flex; background: #000; color: #fff; font-size: 20px; line-height: 74px; letter-spacing: -.1px; }
.launcher { width: 77px; background: #d24726; border-right: 2px solid #e28a74; display: flex; align-items: center; justify-content: center; }
.brand { width: 323px; background: #d24726; padding-left: 29px; font-size: 31px; letter-spacing: -.4px; line-height: 78px; }
.crumbs { width: 494px; padding-left: 15px; display: flex; align-items: center; }
.crumbs span { padding-top: 4px; }
.crumbs svg { margin: 0 10px; }
.ctx { width: 155px; background: #fff8ed; color: #c4502c; font-size: 15.500px; text-align: center; line-height: 71px; }
.doc { width: 589px; display: flex; padding: 2px 0 0 41px; }
.dname { width: 132px; } .dash { width: 31px; } .saved { letter-spacing: 0; }
.skype { width: 73px; border: solid #555; border-width: 0 2px 0 1px; display: flex; align-items: center; justify-content: center; }
.sk { font: 700 20px "Open Sans", sans-serif; fill: #000; }
.account { flex: 1; background: #e1e1e1; color: #555; display: flex; align-items: center; padding: 3px 0 0 15px; }
.me { width: 86px; } .so { line-height: 27px; border-left: 1px solid #c5c5c5; padding-left: 15px; letter-spacing: -.3px; }

/* ribbon tabs */
.rtabs { height: 45px; background: #e1e1e1; display: flex; font-size: 17px; line-height: 46px; letter-spacing: .1px; text-align: center; }
.rtabs > * { flex: none; }
.t1 { width: 90px; margin-right: 9px; letter-spacing: -.4px; } .t2 { width: 87px; background: #fff; color: #d24726; } .t3 { width: 107px; } .t4 { width: 99px; } .t5 { width: 160px; } .t6 { width: 145px; } .t7 { width: 111px; } .t8 { width: 80px; margin-right: 6px; } .t9 { width: 155px; background: #fff8ed; }
.tell { width: 320px; margin-right: 24px; padding-left: 24px; display: flex; align-items: center; gap: 14px; letter-spacing: 0; color: #666; }
.openpp { height: 24px; line-height: 24px; margin-top: 11px; border-left: 2px solid #c6c6c6; padding-left: 15px; }

/* ribbon */
.ribbon { height: 162px; background: #fff; border-bottom: 1px solid #d8d8d8; display: flex; padding-top: 12px; font-size: 16.500px; letter-spacing: .1px; }
.grp { height: 141px; border-right: 2px solid #e0e0e0; flex: none; }
.body { height: 125px; display: flex; }
.gl { text-align: center; font-size: 14.200px; line-height: 24px; color: #666; }
.big { display: flex; flex-direction: column; align-items: center; padding-top: 4px; line-height: 22px; text-align: center; }
.big span { margin-top: 9px; letter-spacing: 0; }
.big .pl { margin-right: 4px; }
.big .dd { margin-top: 9px; }
.big .in { display: inline-block; vertical-align: 2px; }
.mute, .off { color: #a8a8a8; }
.rows { display: flex; flex-direction: column; }
.row { display: flex; align-items: center; height: 24px; gap: 5px; }
.rows.two { padding-top: 12px; gap: 38px; }
.rows.three { padding-top: 2px; gap: 16px; letter-spacing: .35px; }
.g-undo { width: 75px; } .g-undo .body { flex-direction: column; padding: 13px 0 0 19px; gap: 40px; }
.g-clip { width: 251px; } .g-clip .body { padding-left: 26px; } .g-clip .rows { margin-left: 22px; }
.g-del { width: 92px; } .g-del .body { padding-left: 20px; }
.g-slides { width: 253px; } .g-slides .body { padding-left: 21px; } .g-slides .rows { margin-left: 24px; }
.g-font { width: 395px; } .g-font .body { flex-direction: column; padding-left: 9px; }
.fontrow { display: flex; padding-top: 2px; height: 35px; }
.fontrow > * { flex: none; }
.sel { height: 33px; border: 2px solid #dcdcdc; display: flex; align-items: center; justify-content: space-between; padding: 0 5px 1px 3px; }
.face { width: 180px; margin-right: 3px; } .size { width: 75px; padding-left: 4px; margin-right: 17px; }
.grow { width: 59px; display: flex; font-size: 19px; font-weight: 600; line-height: 44px; color: #555; }
.grow svg { margin-top: 11px; }
.shrink { font-size: 16px; line-height: 48px; }
.stylerow { display: flex; margin-top: 38px; height: 24px; line-height: 24px; font-weight: 700; font-size: 17px; color: #555; }
.stylerow > * { width: 58.500px; text-align: center; flex: none; margin-right: 0; }
.stylerow b { width: 42px; margin-right: 8px; } .stylerow i { font-family: "Liberation Serif", serif; font-size: 19px; } .stylerow s { font-size: 15px; letter-spacing: -1px; font-weight: 600; }
.stylerow .fc { display: flex; align-items: center; gap: 5px; margin-left: 17px; }
.fc em { font-style: normal; font-size: 19px; font-weight: 600; line-height: 21px; width: 24px; border-bottom: 6px solid #3f78b3; }
.g-para { width: 367px; } .g-para .body { display: grid; grid-template-columns: repeat(6, 42px); grid-template-rows: 46px 47px; gap: 15px 16.500px; padding: 2px 0 0 9px; align-content: start; }
.cell { display: flex; align-items: center; justify-content: center; padding: 0 1px 2px 0; }
.cell.on { background: #fbccb5; }
.cell.w { justify-content: flex-start; padding-left: 9px; gap: 6px; width: 60px; }
.nums { font: 700 9px "Open Sans", sans-serif; fill: #3f78b3; }
.g-draw { width: 319px; }
.c1 { width: 64px; margin-left: 16px; } .c2 { width: 70px; margin-left: 17px; } .c3 { width: 70px; margin-left: 8px; }
.c3 svg:first-child { margin-left: 4px; }
.mini { margin: 1px 0 0 16px; display: flex; flex-direction: column; gap: 14px; }
.mini div { display: flex; align-items: center; gap: 5px; height: 26px; }
.g-edit { width: 90px; } .g-edit .body { padding: 2px 0 0 14px; } .g-edit .row { gap: 7px; }
.collapse { margin: 125px 0 0 47px; }

/* work area */
.work { height: 571px; display: flex; background: linear-gradient(#fcfcfc, #f0f0f0); border-bottom: 2px solid #e1e1e1; }
.thumbs { width: 381px; display: flex; border-right: 2px solid #d0d4d8; }
.list { width: 358px; overflow: hidden; height: 569px; }
.titem { display: flex; padding-left: 26px; margin-bottom: 24px; }
.n { width: 31px; font-size: 21px; line-height: 20px; margin-top: -2px; color: #666; flex: none; }
.frame { width: 270px; height: 154px; border: 2px solid #d0d0d8; padding: 1px; background: #fff; }
.ts { height: 148px; background: #212121; position: relative; overflow: hidden; }
.cut .frame { height: 13px; border-top: 0; padding-top: 0; } .cut .ts { height: 10px; }
.th { height: 43px; background: #14c6bd; border-bottom: 1px solid #0d8f88; color: #fff; font: 700 11.300px/46px Lato, sans-serif; letter-spacing: .5px; padding-left: 19px; }
.th em { text-decoration: underline; }
.th::after { content: ""; position: absolute; left: 43px; top: 42px; width: 21px; height: 7px; background: #14c6bd; clip-path: polygon(0 0, 100% 0, 50% 100%); }
.cur { margin-top: -3px; }
.cur .n { width: 28px; color: #d24726; padding-top: 3px; }
.cur .frame { width: 276px; height: 160px; border: 5px solid #f07350; }
.ts ul { list-style: none; margin: 0; padding: 19px 0 0 20px; color: #f4f4f4; font: 700 5.500px/8.700px Lato, sans-serif; }
.ts li { padding-left: 7px; position: relative; }
.ts li::before { content: ""; position: absolute; left: 0; top: 3px; width: 4px; height: 3px; background: #0fb5ac; }
.ts ul.s6 { padding: 6px 0 0 22px; line-height: 8px; }
.ts ul.s6 { font-size: 5.200px; }
.s6 .l2 { margin-left: 10px; } .s6 .l3 { margin-left: 20px; line-height: 6px; } .s6 .gap { margin-top: 8px; }
.sbar { width: 22px; display: flex; flex-direction: column; }
.sb { height: 17px; border: 2px solid #bfc3c7; border-top-width: 1px; display: flex; align-items: center; justify-content: center; background: #f6f6f6; }
.track { height: 298px; }
.thumb { height: 236px; border: 2px solid #bfc3c7; background: #f3f3f3; }
.dn { margin-top: 1px; }
.stage { flex: 1; }
.canvas { height: 521px; padding: 15px 0 0 335px; }
.slide { width: 872px; height: 492px; border: 1px solid #c4c4c4; border-top-width: 2px; background: #212121; position: relative; }
.band, .notch { background: repeating-linear-gradient(45deg, #06c4b8 0 2.500px, #25ccc1 3.300px 5px, #06c4b8 5.660px); }
.band { height: 136px; border-bottom: 2px solid #088f87; padding: 51px 0 0 65px; }
.band h1 { margin: 0; font: 700 36.500px/50px Lato, sans-serif; letter-spacing: 1.550px; color: #fff; text-shadow: 0 2px 3px #0668; }
.notch { width: 63px; height: 24px; margin: -2px 0 0 142px; clip-path: polygon(0 0, 100% 0, 50% 100%); }
.selbox { position: absolute; left: 58px; top: 157px; width: 754px; height: 261px; border: 1px solid #888; }
.h { position: absolute; width: 5px; height: 5px; background: #fff; margin: -3px; }
.h1 { left: 0; top: 0; } .h2 { left: 377px; top: 0; } .h3 { left: 753px; top: 0; } .h4 { left: 0; top: 130px; } .h5 { left: 753px; top: 130px; } .h6 { left: 0; top: 260px; } .h7 { left: 377px; top: 260px; } .h8 { left: 753px; top: 260px; }
.rot { position: absolute; left: 370px; top: -17px; }
.ph { display: flex; align-items: center; padding: 117px 0 0 8px; height: 142px; font: 18px/24px Lato, sans-serif; color: #151515; text-shadow: 0 0 2px #151515; }
.dot { width: 11px; height: 11px; border: 3px solid #161616; border-radius: 50%; margin-right: 11px; }
.caret { width: 1px; height: 20px; background: #999; margin-right: 1px; }
.notes { height: 48px; border-top: 3px solid #d0d4d8; padding-left: 13px; font-size: 20.400px; letter-spacing: .1px; line-height: 37px; color: #222; background: #f1f1f1; }

/* status bar */
.status { height: 32px; background: #fff; display: flex; align-items: center; font-size: 15px; letter-spacing: .1px; padding: 0 0 1px 21px; }
.status > * { flex: none; }
.s1 { width: 117px; } .s2 { width: 1235px; } .s3 { width: 184px; } .s4 { width: 83px; display: flex; align-items: center; gap: 9px; letter-spacing: -.2px; }
.s5b { width: 54px; height: 33px; background: #fbccb5; display: flex; align-items: center; justify-content: center; }
.s6b { margin-left: 18px; } .s7b { margin-left: 36px; } .s8b { margin-left: 31px; width: 56px; letter-spacing: -.7px; }

/* taskbar */
.taskbar { height: 60px; display: flex; position: relative; background: linear-gradient(90deg, #001014, #001115 400px, #10181b 700px, #10181b 973px, #272727 973px); }
.tk { width: 75px; height: 60px; display: flex; align-items: center; justify-content: center; position: relative; flex: none; padding-right: 2px; }
.tk.run::after { content: ""; position: absolute; left: 7px; right: 7px; bottom: 0; height: 3px; background: #ffb3bf; }
.k0 { width: 72px; padding: 0; } .k1 { width: 76px; padding-right: 4px; }
.kc { width: 73px; margin-right: 1px; background: linear-gradient(90deg, #344144 66px, #202b2e 66px 68px, #2c383b 68px); padding-right: 1px; }
.ko { width: 73px; margin-left: 1px; background: linear-gradient(90deg, #b8641f 18px, #a95a19 18px 25px, #ba6622 25px); padding-right: 2px; }
.tk.kc::after, .tk.ko::after { left: 0; right: 0; }
.tk.ko::after { background: #ff7a00; }
.sl { font: 700 17px "Open Sans", sans-serif; fill: #3b1f3d; }
.cmd { font: 700 7px "Liberation Mono", monospace; fill: #ddd; }
.ghost { position: absolute; left: 1204px; top: 0; height: 60px; width: 560px; overflow: hidden; color: #101010; }
.gh1 { font-size: 29.500px; line-height: 30px; margin: -14px 0 0 122px; letter-spacing: -.2px; height: 34px; }
.gh2 { font: 17.950px/24px "Liberation Sans", sans-serif; margin-top: 10px; }
.tray { position: relative; flex: 1; display: flex; color: #fff; padding-left: 474px; border-right: 2px solid #777; margin-right: 6px; }
.y1 { margin-top: 24px; } .y2 { margin: 21px 0 0 27px; } .y3 { margin: 21px 0 0 27px; } .y4 { margin: 21px 0 0 25px; } .y5 { margin: 18px 0 0 25px; } .y6 { margin: 20px 0 0 24px; }
.clock { margin: 4px 0 0 27px; width: 78px; font-size: 17.300px; line-height: 26px; letter-spacing: -.25px; text-align: center; }
```
